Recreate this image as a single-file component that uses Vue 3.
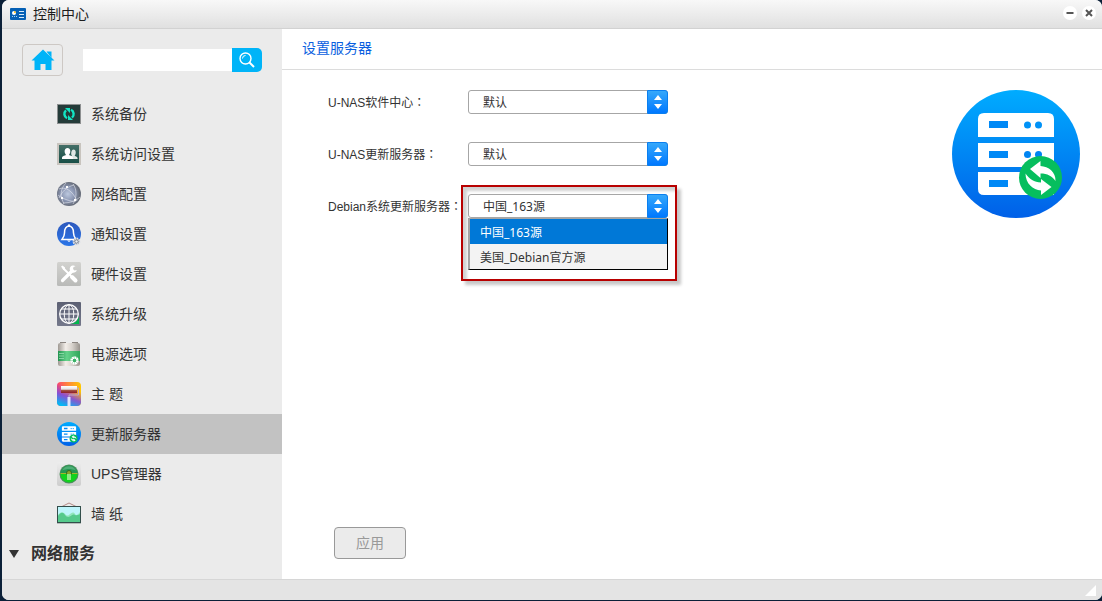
<template>
  <div class="window">
    <header class="titlebar">
      <svg class="titlebar__logo" viewBox="0 0 16 12" aria-hidden="true">
        <rect width="16" height="12" rx="1" fill="#0560b5" />
        <circle cx="4" cy="5" r="2" fill="#fff" />
        <path d="M4 5V3a2 2 0 0 1 2 2z" fill="#ffc629" />
        <path d="M2 8.500h1M4 8.500h1M6 8.500h1" stroke="#9fd0f5" />
        <path d="M9 3.500h5M9 6.500h5M9 9.500h5" stroke="#d8ebfa" />
      </svg>
      <h1 class="titlebar__text">控制中心</h1>
      <button class="titlebar__btn" type="button" aria-label="最小化">
        <svg viewBox="0 0 14 14"><path d="M3.5 7h7" stroke="#555" stroke-width="2" /></svg>
      </button>
      <button class="titlebar__btn" type="button" aria-label="关闭">
        <svg viewBox="0 0 14 14"><path d="M4 4l6 6M10 4l-6 6" stroke="#555" stroke-width="2" /></svg>
      </button>
    </header>

    <div class="body">
      <aside class="sidebar">
        <form class="search" @submit.prevent>
          <button class="search__home" type="button" aria-label="主页">
            <svg viewBox="0 0 24 22">
              <path d="M12 0.5L23.5 11.5H20.5V21H14.5V15H9.5V21H3.5V11.5H0.5z" fill="#00b4f8" />
              <path d="M15.5 2.5h5v6.5z" fill="#00b4f8" />
            </svg>
          </button>
          <input v-model="keyword" class="search__input" type="text" aria-label="搜索" />
          <button class="search__go" type="submit" aria-label="搜索">
            <svg viewBox="0 0 16 16" fill="none" stroke="#fff">
              <circle cx="6.5" cy="6.5" r="5.5" stroke-width="1.4" />
              <path d="M3.5 6.5a3 3 0 0 1 3-3" />
              <path d="M10.5 10.5l4.5 4.5" stroke-width="2" />
            </svg>
          </button>
        </form>

        <nav class="menu" aria-label="设置">
          <a
            v-for="item in items"
            :key="item.icon"
            href="#"
            :class="['menu__item', { 'menu__item--active': item.icon === active }]"
            @click.prevent="active = item.icon"
          >
            <svg class="menu__icon" viewBox="0 0 24 24" aria-hidden="true">
              <g v-if="item.icon === 'backup'">
                <rect y="2" width="24" height="20" fill="#8d8f90" />
                <rect x="1" y="3" width="22" height="18" fill="#243b39" />
                <path d="M10 16.2A4.8 4.8 0 0 1 9 8.300M14 7.800A4.8 4.8 0 0 1 15 15.700" fill="none" stroke="#12e5c4" stroke-width="2.4" />
                <path d="M8 6h5v5zM16 18h-5v-5z" fill="#12e5c4" />
              </g>
              <g v-else-if="item.icon === 'access'">
                <rect y="1" width="24" height="22" fill="#c8c4be" />
                <rect x="2" y="3" width="20" height="18" fill="url(#g-access)" />
                <path d="M13 17v-2l2-1c-1.400-1.600-1-6.500 1.600-6.500s2.800 4.500 1 6.200l2 1c.9.500 1 1.300 1 2.300z" fill="#dfe8e5" />
                <path d="M5 17c0-2.200.4-2.800 4-4-2.200-3-1.700-7 1.500-7s3.700 4 1.500 7c3.400 1.200 4 1.800 4 4z" fill="#fff" />
              </g>
              <g v-else-if="item.icon === 'network'">
                <circle cx="12" cy="12" r="12" fill="url(#g-network)" />
                <path d="M2 16C5 10 9 5 17 3M2 7c6-3 14 2 18 12M6 21c7 0 13-2 17-6M9 1c-6 6-6 13-2 21M16 2c4 5 4 14 0 20M1 13c5 4 13 7 18 6" fill="none" stroke="#eef1f8" stroke-width=".9" opacity=".6" />
                <path d="M9 4h2v2H9zM4 15h2v2H4zM17 17h2v2h-2z" fill="#fff" />
              </g>
              <g v-else-if="item.icon === 'notice'">
                <circle cx="12" cy="12" r="12" fill="url(#g-notice)" />
                <path d="M12 4c-4 .3-4.500 4-4.500 7 0 3-1 4.500-2.500 6.500h14c-1.500-2-2.500-3.500-2.500-6.500 0-3-.5-6.700-4.500-7z" fill="none" stroke="#fff" stroke-width="1.5" />
                <circle cx="12" cy="3.500" r="1.200" fill="#fff" />
                <path d="M10 18.500h4l-2 1.500z" fill="#fff" />
                <circle cx="19.5" cy="19.5" r="3" fill="#78818f" stroke="#dde1e8" stroke-width="2" stroke-dasharray="1.6 .7" />
                <circle cx="19.5" cy="19.5" r="1.2" fill="#eceff3" />
              </g>
              <g v-else-if="item.icon === 'hardware'">
                <rect width="24" height="24" rx="1.5" fill="url(#g-hardware)" />
                <path d="M6 6l8 8" stroke="#fff" stroke-width="2" />
                <path d="M15 15l3.500 3.500" stroke="#fff" stroke-width="4" stroke-linecap="round" />
                <path d="M4 4.500l1.500-1L8 5.500v2L6.500 8z" fill="#fff" />
                <path d="M5.500 18.500L15 9" stroke="#fff" stroke-width="3.2" stroke-linecap="round" />
                <path d="M18.500 4.300a3.600 3.600 0 1 0 1.300 3.600l-2.300.6-1.500-1.500.5-2z" fill="#fff" />
              </g>
              <g v-else-if="item.icon === 'upgrade'">
                <rect width="24" height="24" rx="1" fill="url(#g-upgrade)" />
                <g fill="none" stroke="#fff">
                  <circle cx="12" cy="12" r="9.3" stroke-width="1.3" />
                  <ellipse cx="12" cy="12" rx="4.8" ry="9.3" />
                  <path d="M12 3v18M3 12h18M4.500 7h15M4.500 17h15" />
                </g>
                <path d="M22 14v8h-9c5-.5 8-3 9-8z" fill="#00b84c" />
              </g>
              <g v-else-if="item.icon === 'power'">
                <path d="M3 0h6v1H3zM15 0h6v1h-6z" fill="#8d8782" />
                <rect x="1" y="1" width="22" height="23" rx="2" fill="url(#g-metal)" />
                <rect x="1" y="9" width="22" height="10" fill="url(#g-power)" />
                <path d="M2 11.500h5M2 14h5M2 16.500h5" stroke="#99dfb2" stroke-width=".8" />
                <circle cx="17.5" cy="18.5" r="3.3" fill="#38b165" stroke="#fff" stroke-width="1.8" stroke-dasharray="2 .5" />
                <circle cx="17.5" cy="18.5" r="2.3" fill="none" stroke="#fff" />
              </g>
              <g v-else-if="item.icon === 'theme'">
                <rect width="24" height="24" rx="4" fill="url(#g-theme)" />
                <rect width="24" height="24" rx="4" fill="url(#g-theme-glow)" />
                <rect x="4" y="4" width="16" height="7" fill="url(#g-roller)" />
                <path d="M20 6h1.500v7H12v3" fill="none" stroke="#b9a9c9" />
                <path d="M10.500 15h3v9h-3z" fill="#dfe4fb" />
              </g>
              <g v-else-if="item.icon === 'update'">
                <use href="#server-art" />
              </g>
              <g v-else-if="item.icon === 'ups'">
                <rect width="24" height="24" rx="2" fill="url(#g-ups)" />
                <circle cx="12" cy="12" r="9.5" fill="#4a8f5c" />
                <path d="M3.500 12h17a8.500 8.500 0 0 1-17 0z" fill="#12d21e" />
                <path d="M3.500 12a8.500 8.500 0 0 1 17 0z" fill="#269654" />
                <path d="M5 8.500a7.800 7.800 0 0 1 14 0c-5-2-9-2-14 0z" fill="#4fae76" />
                <path d="M3.500 11.500h17" stroke="#a7b529" />
                <circle cx="12" cy="11" r="2.5" fill="#8aa52b" stroke="#2d6b23" />
                <path d="M10 12h4v6h-4z" fill="#8cea82" />
              </g>
              <g v-else>
                <path d="M5 4.500l7-3.500 7 3.500" fill="none" stroke="#b28b87" />
                <rect y="4" width="24" height="17" fill="#334e4b" />
                <rect x="1" y="5" width="22" height="15" fill="#bdf5fb" />
                <path d="M1 13c3-4 5-3 7-1s3 2 5 0 4-2 5 0 3 1 5-2v10H1z" fill="#91e6bb" />
                <path d="M1 14c3-4 5-4 7-1s5 2 7 0 4 2 8-1v8H1z" fill="#55ca8c" />
                <path d="M0 21.500h24" stroke="#b5bbb9" />
              </g>
            </svg>
            <span>{{ item.label }}</span>
          </a>
        </nav>

        <button class="group" type="button" aria-expanded="true">
          <svg class="group__arrow" viewBox="0 0 10 8" aria-hidden="true"><path d="M0 0h10L5 8z" fill="#333" /></svg>
          <span>网络服务</span>
        </button>
      </aside>

      <main class="content">
        <h2 class="content__title">设置服务器</h2>
        <form class="panel" @submit.prevent>
          <div class="panel__top">
            <div class="fields">
              <div v-for="field in fields" :key="field.id" class="field">
                <label class="field__label" :for="field.id">{{ field.label }}<span class="field__colon">：</span></label>
                <div :class="['picker', { 'picker--marked': field.open }]">
                  <select :id="field.id" v-model="field.value" class="picker__select">
                    <option v-for="option in field.options" :key="option">{{ option }}</option>
                  </select>
                  <span class="picker__arrows" aria-hidden="true">
                    <svg viewBox="0 0 8 14"><path d="M4 0l4 5H0zM4 14l4-5H0z" fill="#fff" /></svg>
                  </span>
                  <ul v-if="field.open" class="picker__list" role="listbox">
                    <li
                      v-for="option in field.options"
                      :key="option"
                      role="option"
                      :aria-selected="option === field.value"
                      :class="['picker__option', { 'picker__option--on': option === field.value }]"
                      @click="field.value = option"
                    >
                      {{ option }}
                    </li>
                  </ul>
                </div>
              </div>
            </div>
            <svg class="hero" viewBox="0 0 24 24" aria-hidden="true">
              <use href="#server-art" />
            </svg>
          </div>
          <button class="apply" type="submit" disabled>应用</button>
        </form>
      </main>
    </div>

    <footer class="statusbar">
      <svg class="statusbar__grip" viewBox="0 0 11 11" aria-hidden="true"><path d="M11 0v11H0z" fill="#fff" /></svg>
    </footer>

    <svg class="defs" aria-hidden="true">
      <defs>
        <linearGradient id="g-server" x2="0" y2="1">
          <stop offset="0" stop-color="#00acff" />
          <stop offset="1" stop-color="#0060e8" />
        </linearGradient>
        <linearGradient id="g-access" x2="0" y2="1">
          <stop offset="0" stop-color="#446f67" />
          <stop offset="1" stop-color="#184f47" />
        </linearGradient>
        <radialGradient id="g-network" cx=".45" cy=".5">
          <stop offset="0" stop-color="#bcc8df" />
          <stop offset=".6" stop-color="#8994b0" />
          <stop offset="1" stop-color="#686e7b" />
        </radialGradient>
        <linearGradient id="g-notice" x2="0" y2="1">
          <stop offset="0" stop-color="#2d59bd" />
          <stop offset="1" stop-color="#2a75e8" />
        </linearGradient>
        <linearGradient id="g-hardware" x2="0" y2="1">
          <stop offset="0" stop-color="#d2d2cf" />
          <stop offset="1" stop-color="#b9bab8" />
        </linearGradient>
        <linearGradient id="g-upgrade" x2="0" y2="1">
          <stop offset="0" stop-color="#5c6073" />
          <stop offset="1" stop-color="#74788b" />
        </linearGradient>
        <linearGradient id="g-metal">
          <stop offset="0" stop-color="#9e9993" />
          <stop offset=".35" stop-color="#f3eee9" />
          <stop offset=".65" stop-color="#d6d1cb" />
          <stop offset="1" stop-color="#98938d" />
        </linearGradient>
        <linearGradient id="g-power">
          <stop offset="0" stop-color="#239350" />
          <stop offset=".4" stop-color="#65d28b" />
          <stop offset="1" stop-color="#30a65a" />
        </linearGradient>
        <linearGradient id="g-theme" x2="1" y2="0">
          <stop offset="0" stop-color="#ff4569" />
          <stop offset=".5" stop-color="#ff8b38" />
          <stop offset="1" stop-color="#ffc800" />
        </linearGradient>
        <linearGradient id="g-theme-glow" x1=".6" y1=".25" x2=".3" y2="1">
          <stop offset="0" stop-color="#943fda" stop-opacity="0" />
          <stop offset=".5" stop-color="#7a4fe0" stop-opacity=".9" />
          <stop offset="1" stop-color="#00baf5" />
        </linearGradient>
        <linearGradient id="g-roller" x2="0" y2="1">
          <stop offset="0" stop-color="#fff" />
          <stop offset=".45" stop-color="#e6dfe2" />
          <stop offset=".65" stop-color="#a04a3c" />
          <stop offset="1" stop-color="#8e1f2b" />
        </linearGradient>
        <linearGradient id="g-ups" x2="0" y2="1">
          <stop offset="0" stop-color="#ededed" />
          <stop offset="1" stop-color="#cdcdcd" />
        </linearGradient>
        <symbol id="server-art" viewBox="0 0 128 128">
          <circle cx="64" cy="64" r="64" fill="url(#g-server)" />
          <path d="M32 23h64q6 0 6 6v18H26V29q0-6 6-6zM26 53h76v24H26zM26 82h76v23H32q-6 0-6-6z" fill="#fff" />
          <path d="M37 31h19v7H37zM37 61h19v7H37zM37 90h19v7H37z" fill="#0089f6" />
          <circle cx="75.5" cy="35" r="3.5" fill="#0092f7" />
          <circle cx="86.5" cy="35" r="3.5" fill="#0092f7" />
          <circle cx="75.5" cy="64.5" r="3.5" fill="#0085f2" />
          <circle cx="86.5" cy="64.5" r="3.5" fill="#0085f2" />
          <circle cx="88.5" cy="87.5" r="21.5" fill="#06be5e" />
          <path d="M78 79l10.500-8v5c8 .5 15.500 6 15 15-3.500-5-8-7.500-15-7.500V88z" fill="#fff" />
          <path d="M99.500 97l-10.500 8v-4.500c-8-.5-15.500-7-15.500-17 4 6 8.500 8.500 15.500 9V89z" fill="#fff" />
        </symbol>
      </defs>
    </svg>
  </div>
</template>

<script setup>
import { reactive, ref } from 'vue';

const keyword = ref('');
const active = ref('update');

const items = [
  { icon: 'backup', label: '系统备份' },
  { icon: 'access', label: '系统访问设置' },
  { icon: 'network', label: '网络配置' },
  { icon: 'notice', label: '通知设置' },
  { icon: 'hardware', label: '硬件设置' },
  { icon: 'upgrade', label: '系统升级' },
  { icon: 'power', label: '电源选项' },
  { icon: 'theme', label: '主 题' },
  { icon: 'update', label: '更新服务器' },
  { icon: 'ups', label: 'UPS管理器' },
  { icon: 'wallpaper', label: '墙 纸' }
];

const fields = reactive([
  { id: 'software', label: 'U-NAS软件中心', value: '默认', options: ['默认'], open: false },
  { id: 'unas', label: 'U-NAS更新服务器', value: '默认', options: ['默认'], open: false },
  {
    id: 'debian',
    label: 'Debian系统更新服务器',
    value: '中国_163源',
    options: ['中国_163源', '美国_Debian官方源'],
    open: true
  }
]);
</script>

<style>
body {
  background: #0b2038;
}
</style>

<style scoped>
* {
  box-sizing: border-box;
}

button,
input,
select {
  margin: 0;
  padding: 0;
  border: 0;
  font: inherit;
  color: inherit;
}

button,
svg {
  flex-shrink: 0;
}

.window {
  display: flex;
  flex-direction: column;
  min-height: calc(100vh - 1px);
  margin: 0 0 1px 2px;
  border-radius: 7px;
  overflow: hidden;
  background: #fff;
  color: #333;
  font-family: 'Liberation Sans', 'Noto Sans CJK SC', sans-serif;
  font-size: 14px;
  line-height: 20px;
}

.titlebar {
  display: flex;
  align-items: center;
  gap: 5px;
  height: 29px;
  padding: 0 6px 0 8px;
  border-bottom: 1px solid #d2d2d2;
  background: linear-gradient(#f8f8f8, #e0e0e0);
}

.titlebar__logo {
  width: 16px;
  height: 12px;
}

.titlebar__text {
  flex: 1;
  margin: 0 0 0 2px;
  font-size: 14px;
  font-weight: 400;
  color: #1c1c1c;
}

.titlebar__btn {
  width: 14px;
  height: 14px;
  margin-bottom: 3px;
  border-radius: 50%;
  background: #fff;
}

.titlebar__btn svg {
  display: block;
}

.body {
  display: flex;
  flex: 1;
}

.sidebar {
  flex: 0 0 280px;
  min-width: 0;
  background: #ebebeb;
}

.search {
  display: flex;
  align-items: center;
  padding: 15px 20px 18px;
}

.search__home {
  display: flex;
  align-items: center;
  justify-content: center;
  width: 41px;
  height: 32px;
  margin-right: 20px;
  border: 1px solid #cdc8c4;
  border-radius: 4px;
  background: transparent;
}

.search__home svg {
  width: 24px;
  height: 22px;
}

.search__input {
  flex: 1;
  min-width: 0;
  height: 22px;
  padding: 0 6px;
  background: #fff;
  outline: none;
}

.search__go {
  display: flex;
  align-items: center;
  justify-content: center;
  width: 30px;
  height: 24px;
  border-radius: 0 5px 5px 0;
  background: #00b4f8;
}

.search__go svg {
  width: 16px;
  height: 16px;
}

.menu__item {
  display: flex;
  align-items: center;
  gap: 10px;
  height: 40px;
  padding-left: 55px;
  color: inherit;
  text-decoration: none;
}

.menu__item--active {
  background: #c2c2c2;
}

.menu__icon {
  width: 24px;
  height: 24px;
}

.group {
  display: flex;
  align-items: center;
  gap: 12px;
  width: 100%;
  height: 40px;
  padding-left: 7px;
  background: transparent;
  font-size: 16px;
  font-weight: 700;
}

.group__arrow {
  width: 10px;
  height: 8px;
}

.content {
  display: flex;
  flex: 1;
  flex-direction: column;
  min-width: 0;
}

.content__title {
  margin: 0;
  padding: 9px 20px 11px;
  border-bottom: 1px solid #dcdcdc;
  font-size: 14px;
  font-weight: 400;
  color: #0a5fe0;
}

.panel {
  display: flex;
  flex: 1;
  flex-direction: column;
  justify-content: space-between;
  padding: 20px 22px 20px 46px;
}

.panel__top {
  display: flex;
  justify-content: space-between;
}

.fields {
  display: grid;
  align-content: start;
  gap: 28px;
}

.field {
  display: grid;
  grid-template-columns: 140px 200px;
  align-items: center;
  font-size: 12px;
}

.field__label {
  white-space: nowrap;
}

.field__colon {
  font-family: 'Noto Sans CJK TC', sans-serif;
}

.picker {
  position: relative;
}

.picker__select {
  display: block;
  width: 100%;
  height: 24px;
  padding: 2px 34px 0 14px;
  border: 1px solid #a6a6a6;
  border-radius: 3px;
  background: #fff;
  font-family: 'Noto Sans', 'Noto Sans CJK SC', sans-serif;
  appearance: none;
}

.picker__arrows {
  position: absolute;
  top: 0;
  right: 0;
  display: flex;
  align-items: center;
  justify-content: center;
  width: 21px;
  height: 24px;
  border: 1px solid #0a7ff0;
  border-radius: 0 3px 3px 0;
  background: linear-gradient(#35a8fb, #0078ff);
  pointer-events: none;
}

.picker__arrows svg {
  width: 8px;
  height: 14px;
}

/* red callout around the open drop-down */
.picker--marked::after {
  content: '';
  position: absolute;
  inset: -9px -9px -63px -7px;
  border: 2px solid #b80000;
  box-shadow:
    4px 4px 3px rgba(0, 0, 0, 0.22),
    inset 4px 4px 3px rgba(0, 0, 0, 0.18);
  pointer-events: none;
}

.picker__list {
  position: absolute;
  top: 100%;
  left: 0;
  width: 100%;
  margin: 0;
  padding: 0;
  border: 1px solid #000;
  border-top-color: #a6a6a6;
  border-left: 2px solid #a6a6a6;
  background: #f3f3f3;
  list-style: none;
  font-family: 'Noto Sans', 'Noto Sans CJK SC', sans-serif;
}

.picker__option {
  padding: 2px 0 0 10px;
  line-height: 23px;
}

.picker__option--on {
  background: #0078d7;
  color: #fff;
}

.hero {
  width: 128px;
  height: 128px;
}

.apply {
  align-self: flex-start;
  width: 72px;
  height: 32px;
  margin-left: 6px;
  border: 1px solid #999;
  border-radius: 4px;
  background: #ebebeb;
  color: #999;
}

.statusbar {
  display: flex;
  align-items: center;
  justify-content: flex-end;
  height: 21px;
  padding-right: 6px;
  border-top: 1px solid #d6d6d6;
  background: #e4e4e4;
}

.statusbar__grip {
  width: 11px;
  height: 11px;
}

.defs {
  position: absolute;
  width: 0;
  height: 0;
}
</style>
